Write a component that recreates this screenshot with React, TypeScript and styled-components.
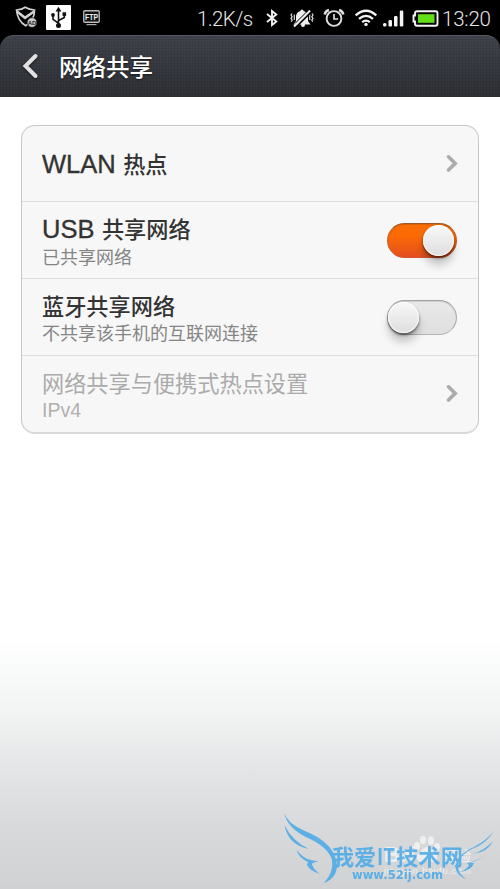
import React from "react";
import styled, { createGlobalStyle } from "styled-components";

const GlobalStyle = createGlobalStyle`
  body {
    margin: 0;
    background: #000;
  }
  * {
    box-sizing: border-box;
  }
`;

const cjk = `"Noto Sans CJK SC", sans-serif`;

const Screen = styled.div`
  position: relative;
  width: 500px;
  height: 889px;
  overflow: hidden;
  display: flex;
  flex-direction: column;
  background: #000;
  font-family: "Liberation Sans", ${cjk};
`;

const StatusBar = styled.div`
  height: 35px;
  flex: none;
  display: flex;
  justify-content: space-between;
  padding: 0 8px 0 14px;
  background: #000;
`;

const StatusGroup = styled.div`
  display: flex;
  align-items: center;
`;

const StatusIcon = styled.svg<{ $gap: number; $top?: number }>`
  display: block;
  flex: none;
  margin-left: ${(p) => p.$gap}px;
  margin-top: ${(p) => p.$top ?? 0}px;
`;

const StatusText = styled.span<{ $width: number; $gap?: number; $tracking?: number }>`
  width: ${(p) => p.$width}px;
  margin-left: ${(p) => p.$gap ?? 0}px;
  color: #e6e6e6;
  font-family: Roboto, "Liberation Sans", sans-serif;
  font-weight: 300;
  font-size: 20.5px;
  letter-spacing: ${(p) => p.$tracking ?? 0}px;
  line-height: 35px;
  margin-top: 3px;
  white-space: nowrap;
`;

const Header = styled.header`
  height: 62px;
  flex: none;
  display: flex;
  align-items: center;
  padding-left: 22px;
  border-radius: 14px 14px 0 0;
  border-top: 1px solid #555962;
  background:
    repeating-linear-gradient(90deg, rgba(0, 0, 0, 0.07) 0 1px, transparent 1px 3px),
    repeating-linear-gradient(0deg, rgba(0, 0, 0, 0.07) 0 1px, transparent 1px 3px),
    linear-gradient(#41444c, #2e3036);
`;

const BackIcon = styled.svg`
  display: block;
  margin-top: -1px;
  filter: drop-shadow(0 1px 1px rgba(0, 0, 0, 0.6));
`;

const Title = styled.h1`
  margin: -2px 0 0 20px;
  color: #fff;
  font-family: ${cjk};
  font-weight: 500;
  font-size: 23.5px;
  line-height: 34px;
  text-shadow: 0 1px 2px rgba(0, 0, 0, 0.6);
`;

const Content = styled.main`
  flex: 1;
  padding: 28px 21px 0;
  background: linear-gradient(
    #fff 0,
    #fff 540px,
    #f1f3f3 620px,
    #e2e4e5 677px,
    #d9dadc 727px,
    #d0d1d3 792px
  );
`;

const Card = styled.div`
  height: 309px;
  border: 1px solid #c9c9c9;
  border-bottom: 2px solid #d9d9d9;
  border-radius: 14px;
  background: #f7f7f7;
`;

const Row = styled.div`
  height: 77px;
  display: flex;
  align-items: center;
  justify-content: space-between;
  padding: 0 21px 0 20px;
  &:first-child {
    height: 75px;
  }
  & + & {
    border-top: 1px solid #dedede;
  }
`;

const RowText = styled.div`
  display: flex;
  flex-direction: column;
  padding-top: 2px;
`;

const RowTitle = styled.div<{ $disabled?: boolean }>`
  color: ${(p) => (p.$disabled ? "#ababab" : "#333")};
  font-family: ${cjk};
  font-weight: ${(p) => (p.$disabled ? 400 : 500)};
  font-size: 22.2px;
  line-height: 28px;
  white-space: nowrap;
`;

const Latin = styled.span`
  margin-right: 2.5px;
  font-family: "Liberation Sans", sans-serif;
  font-weight: 400;
  font-size: 25.5px;
  -webkit-text-stroke: 0.35px currentColor;
`;

const RowNote = styled.div<{ $disabled?: boolean; $latin?: boolean }>`
  margin-top: ${(p) => (p.$latin ? 3 : 0)}px;
  color: ${(p) => (p.$disabled ? "#b0b0b0" : "#858585")};
  font-family: ${(p) => (p.$latin ? `"Liberation Sans", sans-serif` : cjk)};
  font-weight: 400;
  font-size: ${(p) => (p.$latin ? 19.5 : 18)}px;
  line-height: ${(p) => (p.$latin ? 23 : 26)}px;
  white-space: nowrap;
`;

const Arrow = styled.svg`
  display: block;
  margin-right: -2px;
`;

const Track = styled.div<{ $on: boolean }>`
  width: 70px;
  height: 35px;
  flex: none;
  display: flex;
  align-items: center;
  justify-content: ${(p) => (p.$on ? "flex-end" : "flex-start")};
  padding: ${(p) => (p.$on ? "0 2px 0 1px" : "0")};
  border: 1px solid;
  border-color: ${(p) => (p.$on ? "#9c5a2c #c8602c #d8552c" : "#a2a2a2 #ababab #b5b5b5")};
  border-radius: 18px;
  background: ${(p) =>
    p.$on ? "linear-gradient(#fb6d04, #fb6a05 35%, #e4501f)" : "linear-gradient(#e9e9e9, #dfdfdf)"};
  box-shadow: inset 0 1px 1px rgba(0, 0, 0, 0.12);
`;

const Knob = styled.div`
  width: 31px;
  height: 31px;
  border-radius: 50%;
  background: linear-gradient(#f8f8f8, #dedede);
  box-shadow:
    inset 0 0 1px 1px rgba(255, 255, 255, 0.75),
    0 2px 3px rgba(0, 0, 0, 0.55),
    0 9px 8px rgba(0, 0, 0, 0.2);
`;

const Watermark = styled.svg`
  position: absolute;
  left: 270px;
  bottom: 0;
`;

const Toggle = ({ on }: { on: boolean }) => (
  <Track $on={on} role="switch" aria-checked={on}>
    <Knob />
  </Track>
);

const Chevron = () => (
  <Arrow width="14" height="20" viewBox="0 0 14 20" fill="none" stroke="#acacac" strokeWidth="3.6" strokeLinecap="round" strokeLinejoin="miter">
    <path d="M3.5 2.8 L10.2 9.4 L3.5 16" />
  </Arrow>
);

const ShieldIcon = () => (
  <StatusIcon $gap={0} $top={-1} width="24" height="24" viewBox="0 0 24 24" fill="none" stroke="#d2d2d2">
    <path d="M2.5 5 Q8 4.5 11.2 2.2 Q15 4.6 20.5 5 Q20.6 15 11.8 20.8 Q3.5 16 2.5 5Z" strokeWidth="1.7" />
    <path d="M3 6.5 L11 12.8 L20 6.5" strokeWidth="2.6" />
    <circle cx="18" cy="17.5" r="4.9" fill="#c9c9c9" stroke="#000" strokeWidth=".6" />
    <text x="18" y="19.8" textAnchor="middle" fontFamily="Liberation Sans" fontWeight="700" fontSize="6" fill="#222" stroke="none">AD</text>
  </StatusIcon>
);

const UsbIcon = () => (
  <StatusIcon $gap={8} $top={-1} width="25" height="25" viewBox="0 0 25 25">
    <rect width="25" height="25" rx="1" fill="#fff" />
    <path d="M12.5 5v15M12.3 18 L7 14.4V10.5M12.7 15.5 L18.3 12.5V9" fill="none" stroke="#111" strokeWidth="1.6" />
    <path d="M12.5 1.8 L15.4 6.5H9.6Z" fill="#111" />
    <circle cx="12.5" cy="20.6" r="2.5" fill="#111" />
    <circle cx="7" cy="10" r="1.9" fill="#111" />
    <rect x="16.5" y="7.3" width="3.6" height="3.6" fill="#111" />
  </StatusIcon>
);

const FtpIcon = () => (
  <StatusIcon $gap={12} width="18" height="16" viewBox="0 0 18 16">
    <rect x=".75" y=".75" width="15.5" height="11.5" rx="1" fill="#111" stroke="#bbb" strokeWidth="1.3" />
    <text x="2" y="10" fontFamily="Liberation Sans" fontWeight="700" fontSize="9" textLength="13" lengthAdjust="spacingAndGlyphs" fill="#eee">FTP</text>
    <path d="M3.5 14.6h10" stroke="#aaa" strokeWidth="1.2" />
  </StatusIcon>
);

const BluetoothIcon = () => (
  <StatusIcon $gap={12} $top={1} width="14" height="18" viewBox="0 0 14 18" fill="none" stroke="#f2f2f2" strokeWidth="1.9">
    <path d="M2 5 L11.3 12.6 L7 16V2 L11.3 5.4 L2 13" />
  </StatusIcon>
);

const MuteIcon = () => (
  <StatusIcon $gap={11} $top={1} width="24" height="20" viewBox="0 0 24 20">
    <path d="M12 1.6a1.6 1.6 0 0 1 1.6 1.5C17 4 18 6.5 18 9.5V13l2.5 3.5H3.5L6 13V9.5C6 6.5 7 4 10.4 3.1A1.6 1.6 0 0 1 12 1.6Z" fill="#eee" />
    <circle cx="13" cy="17" r="2" fill="#eee" />
    <path d="M2 5.5l-1 1.5 1.2 1.7-1.2 1.7 1.2 1.7-1 1.6M22 5.5l1 1.5-1.2 1.7 1.2 1.7-1.2 1.7 1 1.6M4.3 6.5v5.5M19.7 6.5v5.5" fill="none" stroke="#ddd" strokeWidth="1.2" />
    <path d="M5.5 19.5 L21.5 3.5" stroke="#000" strokeWidth="1.8" />
    <path d="M4 18.5 L20 2.5" stroke="#eee" strokeWidth="2.2" />
    <path d="M5 15.5 L18 2.5" stroke="#000" strokeWidth="1" />
  </StatusIcon>
);

const AlarmIcon = () => (
  <StatusIcon $gap={9} width="22" height="20" viewBox="0 0 22 20" fill="none" stroke="#dedede">
    <circle cx="11" cy="10.5" r="7.4" strokeWidth="1.9" />
    <path d="M11 6v5h4.2" strokeWidth="1.7" />
    <path d="M1.7 6.5Q2.3 3 6 2M20.3 6.5Q19.7 3 16 2" strokeWidth="2.5" />
  </StatusIcon>
);

const WifiIcon = () => (
  <StatusIcon $gap={9} width="24" height="19" viewBox="0 0 24 19" fill="none" stroke="#f4f4f4" strokeWidth="2.3">
    <path d="M1.7 7.4Q12-1.8 22.3 7.4M5 10.9Q12 4.9 19 10.9M8.2 14.2Q12 11 15.8 14.2" />
    <circle cx="12" cy="16.4" r="1.7" fill="#f4f4f4" stroke="none" />
  </StatusIcon>
);

const SignalIcon = () => (
  <StatusIcon $gap={5} $top={1} width="21" height="17" viewBox="0 0 21 17" fill="#f4f4f4">
    <rect x="0" y="13" width="3.5" height="3.5" rx="1.5" />
    <rect x="5.5" y="10" width="3.5" height="6.5" rx="1.2" />
    <rect x="11" y="6" width="3.5" height="10.5" rx="1.2" />
    <rect x="16.8" y="0.5" width="3.5" height="16" rx="1.2" />
  </StatusIcon>
);

const BatteryIcon = () => (
  <StatusIcon $gap={8} $top={2} width="27" height="17" viewBox="0 0 27 17">
    <path d="M5 1.2H23.5a2 2 0 0 1 2 2V13.8a2 2 0 0 1-2 2H5a2 2 0 0 1-2-2V11.5H1.5V5.5H3V3.2a2 2 0 0 1 2-2Z" fill="#050505" stroke="#f5f5f5" strokeWidth="1.9" />
    <rect x="6" y="4.2" width="16.5" height="8.6" fill="#62df16" />
  </StatusIcon>
);

const Watermarks = () => (
  <Watermark width="230" height="89" viewBox="0 0 230 89">
    <g fill="#fff" opacity=".6" fontFamily={cjk}>
      <ellipse cx="147" cy="46" rx="3" ry="4" />
      <ellipse cx="153" cy="40" rx="3" ry="4.2" />
      <ellipse cx="161" cy="40.5" rx="3" ry="4.2" />
      <ellipse cx="167" cy="47" rx="3" ry="4" />
      <path d="M157 47c4 0 5 4 8 6s3 8-2 9q-6-2-12 0c-5-1-5-7-2-9s4-6 8-6Z" />
      <text x="114" y="62" fontFamily="Liberation Sans" fontWeight="700" fontSize="22" textLength="31">Bai</text>
      <text x="173" y="61" fontSize="14" fontWeight="500" textLength="28">经验</text>
      <text x="114" y="74" fontFamily="Liberation Sans" fontSize="9.5" textLength="87">jingyan.baidu.com</text>
    </g>
    <g fill="#48a9e8" opacity=".85">
      <path d="M14 13 Q18 24 35 31 Q65 43 67 65 Q67 78 54 83 Q64 72 62 60 Q58 47 38 38 Q18 29 14 13Z" />
      <path d="M14.5 25 Q22 41 39 49 Q18 45 14.5 25Z" />
      <path d="M26.5 50 Q34 59 41 60 L49 61.5 Q43 62 42 64 Q43 69 50 74 Q40 71 37 65 L38 62 Q29 58 26.5 50Z" />
      <path d="M224 31 Q216 44 202 49 Q188 56 188 67 Q188 73 196 79 Q184 74 186 64 Q189 53 204 47 Q217 40 224 31Z" />
      <path d="M223 41 Q218 52 203 54 Q215 50 223 41Z" />
      <path d="M214 56 Q208 61 199 63 L204 63 Q201 71 190 72 Q197 69 199 65 L197 63 Q207 61 214 56Z" />
      <g fontFamily={cjk} fontWeight="700" fontSize="22">
        <text x="62" y="64.5" textLength="44" lengthAdjust="spacingAndGlyphs">我爱</text>
        <text x="107" y="64.5" textLength="18" lengthAdjust="spacingAndGlyphs">IT</text>
        <text x="126" y="64.5" textLength="67" lengthAdjust="spacingAndGlyphs">技术网</text>
      </g>
      <text x="82" y="78.5" fontFamily="DejaVu Sans, sans-serif" fontWeight="700" fontSize="11.5" textLength="91" lengthAdjust="spacingAndGlyphs">www.52ij.com</text>
    </g>
  </Watermark>
);

export default function App() {
  return (
    <>
      <GlobalStyle />
      <Screen>
        <StatusBar>
          <StatusGroup>
            <ShieldIcon />
            <UsbIcon />
            <FtpIcon />
          </StatusGroup>
          <StatusGroup>
            <StatusText $width={56} $tracking={-0.6}>1.2K/s</StatusText>
            <BluetoothIcon />
            <MuteIcon />
            <AlarmIcon />
            <WifiIcon />
            <SignalIcon />
            <BatteryIcon />
            <StatusText $width={50} $gap={3} $tracking={-0.2}>13:20</StatusText>
          </StatusGroup>
        </StatusBar>
        <Header>
          <BackIcon width="17" height="28" viewBox="0 0 17 28" fill="none" stroke="#e2e2e2" strokeWidth="4" strokeLinecap="round">
            <path d="M13.5 4 L3.5 14 L13.5 24" />
          </BackIcon>
          <Title>网络共享</Title>
        </Header>
        <Content>
          <Card>
            <Row>
              <RowTitle><Latin>WLAN</Latin> 热点</RowTitle>
              <Chevron />
            </Row>
            <Row>
              <RowText>
                <RowTitle><Latin>USB</Latin> 共享网络</RowTitle>
                <RowNote>已共享网络</RowNote>
              </RowText>
              <Toggle on />
            </Row>
            <Row>
              <RowText>
                <RowTitle>蓝牙共享网络</RowTitle>
                <RowNote>不共享该手机的互联网连接</RowNote>
              </RowText>
              <Toggle on={false} />
            </Row>
            <Row>
              <RowText>
                <RowTitle $disabled>网络共享与便携式热点设置</RowTitle>
                <RowNote $disabled $latin>IPv4</RowNote>
              </RowText>
              <Chevron />
            </Row>
          </Card>
        </Content>
        <Watermarks />
      </Screen>
    </>
  );
}
